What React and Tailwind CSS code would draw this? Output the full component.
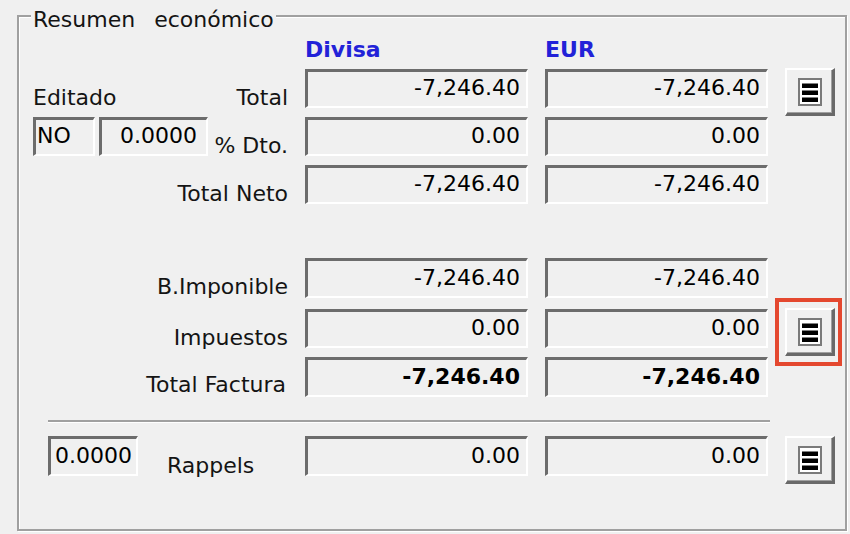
import React from "react";

function ListIcon() {
  return (
    <svg width="24" height="28" viewBox="0 0 24 28">
      <rect x="0" y="0" width="24" height="28" fill="#7a7a7a" />
      <rect x="2" y="2" width="20" height="24" fill="#ffffff" />
      <rect x="4" y="5.5" width="16" height="4.5" fill="#000000" />
      <rect x="4" y="12.5" width="16" height="4.5" fill="#000000" />
      <rect x="4" y="19.5" width="16" height="4.5" fill="#000000" />
    </svg>
  );
}

function ListBtn({ extra = "" }) {
  return (
    <div
      className={
        "w-[50px] h-[48px] flex items-center justify-center bg-[#f0f0f0] border-t-2 border-l-2 border-t-white border-l-white border-b-[3px] border-r-[3px] border-b-[#696969] border-r-[#696969] shadow-[inset_-1px_-1px_0_#a0a0a0] " +
        extra
      }
    >
      <ListIcon />
    </div>
  );
}

const sunken =
  "flex items-center border-t-[3px] border-l-[3px] border-b-2 border-r-2 border-t-[#6c6c6c] border-l-[#6c6c6c] border-b-white border-r-white bg-[#f0f0f0] leading-[24px] text-black pb-[2px]";

function Val({ children, bold = false, h = "h-[39px]" }) {
  return (
    <div className={sunken + " w-[223px] justify-end pr-[6px] " + h + (bold ? " font-bold" : "")}>
      {children}
    </div>
  );
}

function Label({ children, extra = "" }) {
  return <span className={"leading-[20px] text-[#141414] whitespace-nowrap " + extra}>{children}</span>;
}

export default function App() {
  return (
    <div className="w-[850px] h-[534px] bg-[#f0f0f0] pt-[15px] pl-[17px] font-['DejaVu_Sans',sans-serif] text-[22px] overflow-hidden">
      <div className="relative w-[830px] h-[516px] border-2 border-[#a0a0a0] shadow-[inset_1px_1px_0_#fff,1px_1px_0_#fff] flex flex-col">
        <div className="absolute -top-[9px] left-[12px] px-[2px] bg-[#f0f0f0] leading-[24px] text-[#141414] flex gap-[19px]">
          <span>Resumen</span>
          <span>económico</span>
        </div>

        {/* header */}
        <div className="flex mt-[21px] h-[24px] leading-[24px] font-bold text-[#2222d8]">
          <div className="w-[269px]" />
          <div className="ml-[17px] w-[223px]">Divisa</div>
          <div className="ml-[17px] w-[223px]">EUR</div>
        </div>

        {/* Row 1 */}
        <div className="flex items-start h-[39px] mt-[7px]">
          <div className="w-[269px] h-[39px] flex items-end justify-between">
            <Label extra="ml-[14px]">Editado</Label>
            <Label>Total</Label>
          </div>
          <div className="ml-[17px]"><Val>-7,246.40</Val></div>
          <div className="ml-[17px]"><Val>-7,246.40</Val></div>
          <ListBtn extra="ml-[17px] -mt-[1px]" />
        </div>

        {/* Row 2 */}
        <div className="flex items-start h-[39px] mt-[9px]">
          <div className="w-[269px] h-[39px] flex items-end">
            <div className={sunken + " ml-[14px] w-[62px] h-[39px] pl-[1px]"}>NO</div>
            <div className={sunken + " ml-[4px] w-[109px] h-[39px] justify-end pr-[9px]"}>0.0000</div>
            <Label extra="ml-auto">% Dto.</Label>
          </div>
          <div className="ml-[17px]"><Val>0.00</Val></div>
          <div className="ml-[17px]"><Val>0.00</Val></div>
        </div>

        {/* Row 3 */}
        <div className="flex items-start h-[39px] mt-[9px]">
          <div className="w-[269px] h-[39px] flex items-end justify-end">
            <Label>Total Neto</Label>
          </div>
          <div className="ml-[17px]"><Val>-7,246.40</Val></div>
          <div className="ml-[17px]"><Val>-7,246.40</Val></div>
        </div>

        {/* Row 4 */}
        <div className="flex items-start h-[40px] mt-[54px]">
          <div className="w-[269px] h-[40px] flex items-end justify-end">
            <Label extra="mb-[1px]">B.Imponible</Label>
          </div>
          <div className="ml-[17px]"><Val h="h-[40px]">-7,246.40</Val></div>
          <div className="ml-[17px]"><Val h="h-[40px]">-7,246.40</Val></div>
        </div>

        {/* Row 5 */}
        <div className="flex items-start h-[39px] mt-[11px]">
          <div className="w-[269px] h-[39px] flex items-end justify-end">
            <Label>Impuestos</Label>
          </div>
          <div className="ml-[17px]"><Val>0.00</Val></div>
          <div className="ml-[17px]"><Val>0.00</Val></div>
          <div className="ml-[7px] -mt-[11px] border-4 border-[#e4482f] pt-[6px] pb-[6px] pl-[6px] pr-[3px]">
            <ListBtn />
          </div>
        </div>

        {/* Row 6 */}
        <div className="flex items-start h-[40px] mt-[9px]">
          <div className="w-[269px] h-[40px] flex items-end justify-end">
            <Label extra="mb-[2px] mr-[2px]">Total Factura</Label>
          </div>
          <div className="ml-[17px]"><Val h="h-[40px]" bold>-7,246.40</Val></div>
          <div className="ml-[17px]"><Val h="h-[40px]" bold>-7,246.40</Val></div>
        </div>

        {/* Separator */}
        <div className="mt-[23px] ml-[29px] w-[722px] h-[2px] bg-[#a0a0a0] shadow-[0_1px_0_#fff]" />

        {/* Row 7 */}
        <div className="flex items-start h-[40px] mt-[14px]">
          <div className="w-[269px] h-[40px] flex items-end">
            <div className={sunken + " ml-[29px] w-[90px] h-[40px] justify-end pr-[4px] self-start"}>0.0000</div>
            <Label extra="ml-[29px]">Rappels</Label>
          </div>
          <div className="ml-[17px]"><Val h="h-[40px]">0.00</Val></div>
          <div className="ml-[17px]"><Val h="h-[40px]">0.00</Val></div>
          <ListBtn extra="ml-[17px]" />
        </div>
      </div>
    </div>
  );
}
